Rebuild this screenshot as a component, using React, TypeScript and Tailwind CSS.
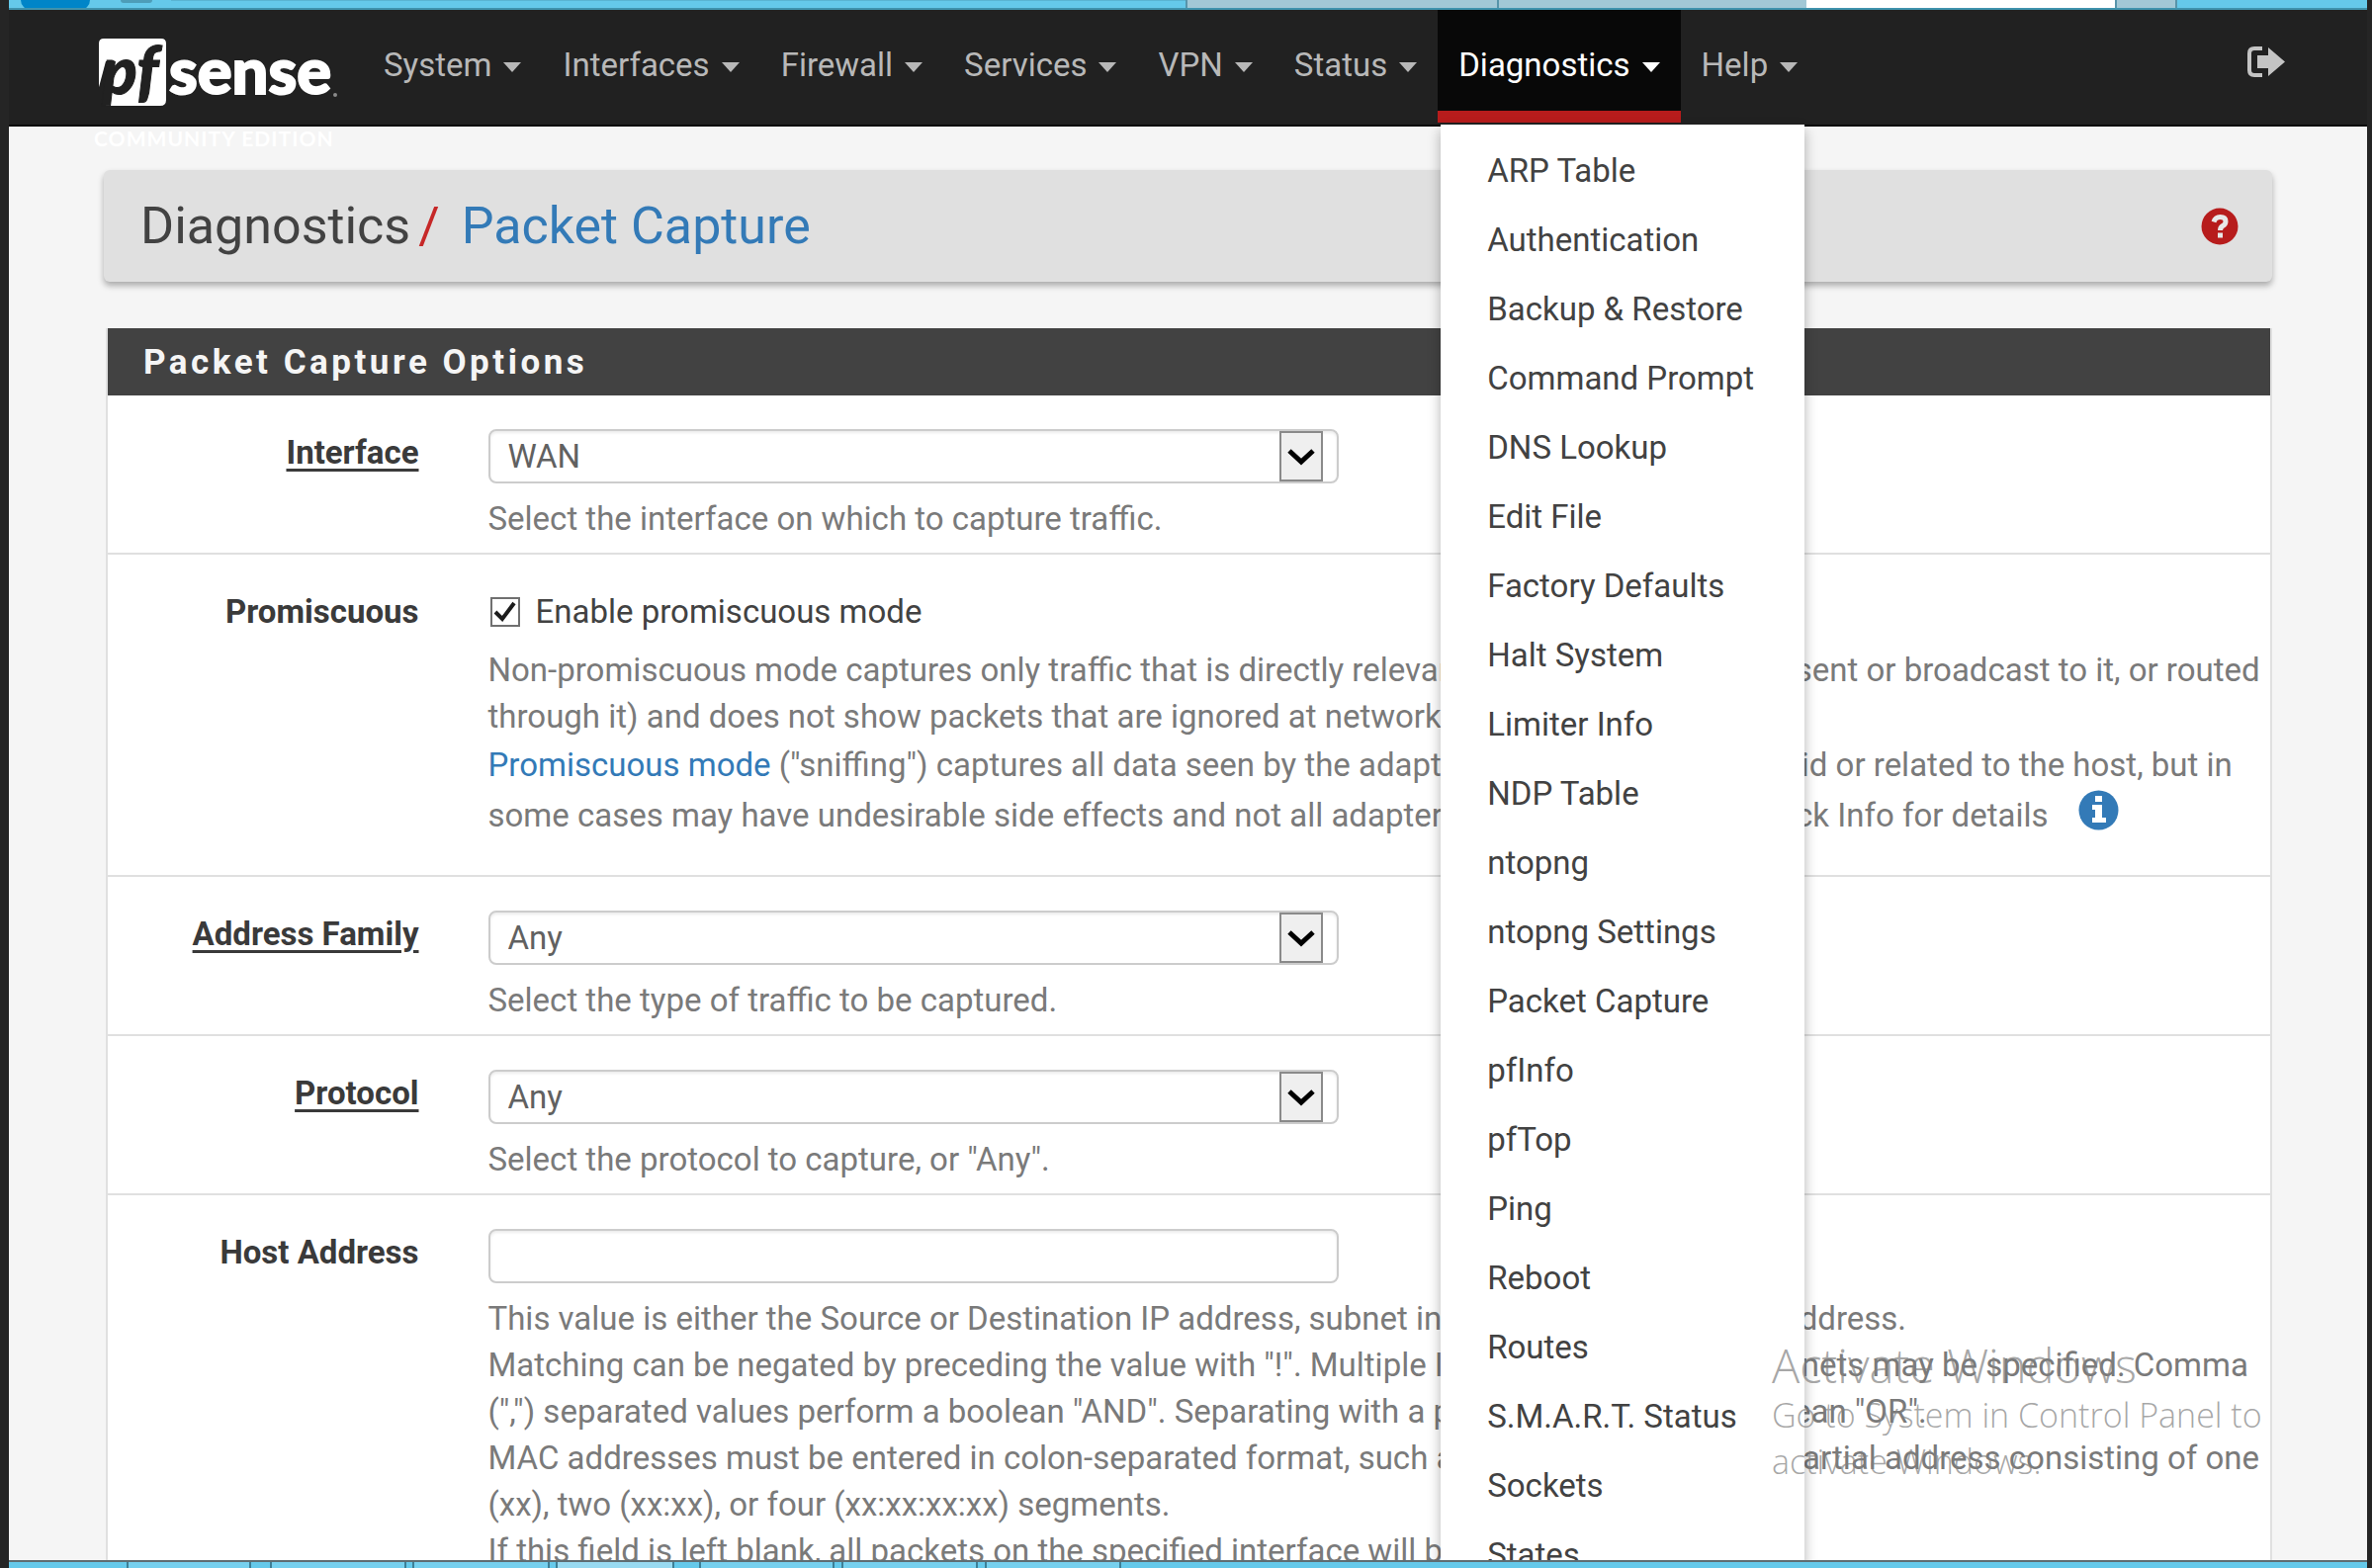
import React from 'react';

const NAV = ['System', 'Interfaces', 'Firewall', 'Services', 'VPN', 'Status', 'Diagnostics', 'Help'];

const MENU = [
  'ARP Table',
  'Authentication',
  'Backup & Restore',
  'Command Prompt',
  'DNS Lookup',
  'Edit File',
  'Factory Defaults',
  'Halt System',
  'Limiter Info',
  'NDP Table',
  'ntopng',
  'ntopng Settings',
  'Packet Capture',
  'pfInfo',
  'pfTop',
  'Ping',
  'Reboot',
  'Routes',
  'S.M.A.R.T. Status',
  'Sockets',
  'States',
];

function Caret() {
  return (
    <svg viewBox="0 0 18 10" className="mt-1 h-[10px] w-[18px]" fill="currentColor" aria-hidden="true">
      <path d="M0 0h18l-9 10z" />
    </svg>
  );
}

function Logo() {
  return (
    <a href="#" aria-label="pfSense home" className="relative ml-[86px] w-[272px] shrink-0">
      <svg viewBox="0 0 250 112" className="absolute top-[26px] left-0 h-[112px] w-[250px]" aria-hidden="true">
        <path d="M10 3H68Q73 3 73 8V65Q73 71 67 71H12L16 56L8 48L5 58V8Q5 3 10 3Z" fill="#fff" />
        <path d="M12 26H22L12 71H4V56Z" fill="#212121" />
        <text
          x="8"
          y="59"
          fill="#212121"
          stroke="#212121"
          strokeWidth="1"
          fontFamily="Lato, 'Open Sans', sans-serif"
          fontWeight="900"
          fontStyle="italic"
          fontSize="66"
        >
          pf
        </text>
        <text
          x="76"
          y="59"
          fill="#fff"
          stroke="#fff"
          strokeWidth="2"
          fontFamily="Lato, 'Open Sans', sans-serif"
          fontWeight="900"
          fontSize="65"
        >
          sense
        </text>
        <circle cx="244" cy="60" r="2" fill="#8a8a8a" />
      </svg>
      <span className="absolute top-[116px] left-0 font-[Lato] text-[21px] leading-7 font-bold tracking-wider whitespace-nowrap text-white">
        COMMUNITY EDITION
      </span>
    </a>
  );
}

function DiagnosticsMenu() {
  return (
    <ul className="absolute top-[116px] left-[3px] z-20 w-[368px] bg-white pt-3 shadow-[0_6px_12px_rgba(0,0,0,0.3)]">
      {MENU.map((item) => (
        <li key={item}>
          <a href="#" className="block pl-[47px] leading-[70px] whitespace-nowrap text-[#424242]">
            {item}
          </a>
        </li>
      ))}
    </ul>
  );
}

function NavBar() {
  return (
    <nav className="relative z-10 flex h-[118px] border-b-2 border-[#080808] bg-[#212121]">
      <Logo />
      <ul className="flex">
        {NAV.map((item) => {
          const open = item === 'Diagnostics';
          return (
            <li key={item} className="relative">
              <button
                type="button"
                aria-expanded={open}
                className={
                  open
                    ? 'flex h-[114px] items-center gap-3 border-b-[12px] border-[#b71c1c] bg-[#080808] px-[21px] pt-[9px] text-white'
                    : 'flex h-[114px] items-center gap-3 border-b-[12px] border-transparent px-[21px] pt-[9px] text-[#b8b8b8]'
                }
              >
                {item}
                <Caret />
              </button>
              {open && <DiagnosticsMenu />}
            </li>
          );
        })}
      </ul>
      <a href="#" aria-label="Log out" className="mt-[37px] mr-[83px] ml-auto h-[31px] text-[#c4c4c4]">
        <svg viewBox="0 0 38 31" className="h-[31px] w-[38px]" aria-hidden="true">
          <path d="M15 2H7Q2 2 2 7V24Q2 29 7 29H15" fill="none" stroke="currentColor" strokeWidth="4" />
          <path d="M10 9H21V1L38 15.500L21 30V22H10Z" fill="currentColor" />
        </svg>
      </a>
    </nav>
  );
}

function Row({
  label,
  htmlFor,
  underline,
  children,
}: {
  label: string;
  htmlFor: string;
  underline?: boolean;
  children: React.ReactNode;
}) {
  return (
    <div className="flex border-b-2 border-[#e0e0e0] pt-[34px] pb-[11px]">
      <div className="w-1/6 shrink-0 pr-[50px] text-right">
        <label
          htmlFor={htmlFor}
          className={
            underline
              ? 'leading-[47px] font-bold text-[#3a3a3a] underline decoration-[3px] underline-offset-[5px]'
              : 'leading-[47px] font-bold text-[#3a3a3a]'
          }
        >
          {label}
        </label>
      </div>
      <div className="min-w-0 flex-1 pr-1 pl-5">{children}</div>
    </div>
  );
}

function SelectBox({ id, value }: { id: string; value: string }) {
  return (
    <div className="relative w-full max-w-[860px]">
      <select
        id={id}
        defaultValue={value}
        className="block h-[55px] w-full appearance-none rounded-lg border-2 border-[#cccccc] bg-white px-[18px] text-[#616161] shadow-[inset_0_2px_3px_rgba(0,0,0,0.08)]"
      >
        <option>{value}</option>
      </select>
      <span className="pointer-events-none absolute top-[2px] right-4 flex h-[51px] w-[44px] items-center justify-center border-2 border-[#8a8a8a] bg-[#efefef]">
        <svg viewBox="0 0 28 18" className="h-[18px] w-[28px]" fill="none" stroke="#000" strokeWidth="5" aria-hidden="true">
          <path d="M2 3L14 14L26 3" />
        </svg>
      </span>
    </div>
  );
}

function Help({ children }: { children: React.ReactNode }) {
  return <p className="mt-3 leading-[47px] text-[#7a7a7a]">{children}</p>;
}

const TASKS = [
  'ml-[119px] w-[126px] bg-[#76d0ee]',
  'ml-[19px] w-[138px] bg-[#76d0ee]',
  'ml-[6px] w-[139px] bg-[#76d0ee]',
  'ml-[6px] w-[120px] bg-[#98daf1]',
  'ml-[25px] w-[137px] bg-[#76d0ee]',
  'ml-[7px] w-[138px] bg-[#76d0ee]',
  'ml-[7px] w-[138px] bg-[#76d0ee]',
];

export default function App() {
  return (
    <div className="flex h-screen flex-col overflow-hidden bg-[#252525] pr-[5px] pl-[9px] font-[Roboto,sans-serif] text-[33px] leading-[38px]">
      <div className="flex h-[10px] shrink-0 overflow-hidden border-b-2 border-[#3f93ad] bg-[#65c9ea]">
        <div className="ml-3 h-[10px] w-[70px] rounded-b-full bg-[#0085c8]" />
        <div className="ml-[31px] h-[3px] w-[32px] rounded-b-full bg-[#4d9db8]" />
        <div className="ml-[19px] h-px flex-1 bg-[#59b4d2]" />
        <div className="w-[315px] border-l-2 border-[#5794aa] bg-[#a2c8d6]" />
        <div className="w-[313px] border-l-2 border-[#5794aa] bg-[#a2c8d6]" />
        <div className="w-[312px] bg-white" />
        <div className="w-[63px] border-x-2 border-[#5794aa] bg-[#a2c8d6]" />
        <div className="w-[192px]" />
      </div>

      <div className="relative min-h-0 flex-1 overflow-hidden bg-[#f5f5f5]">
        <NavBar />

        <header className="mx-24 mt-11 flex h-[113px] items-center justify-between rounded-md bg-[#e0e0e0] pr-[34px] pl-[37px] shadow-[0_4px_6px_rgba(0,0,0,0.3)]">
          <h1 className="flex text-[52px] leading-[60px] whitespace-nowrap">
            <span className="text-[#424242]">Diagnostics</span>
            <span className="pl-2 text-[#c62828]">/</span>
            <a href="#" className="pl-[22px] text-[#337ab7]">
              Packet Capture
            </a>
          </h1>
          <a href="#" aria-label="Help for this page">
            <svg viewBox="0 0 38 38" className="h-[38px] w-[38px]" aria-hidden="true">
              <circle cx="19" cy="19" r="18.500" fill="#b71c1c" />
              <path d="M13 14.500Q14.500 9.500 19.500 9.500Q25 9.500 25 14Q25 17 22 18.500Q19.500 20 19.500 23" fill="none" stroke="#e8e8e8" strokeWidth="5" />
              <rect x="17" y="25.500" width="5" height="5" fill="#e8e8e8" />
            </svg>
          </a>
        </header>

        <section className="mt-[47px] mr-[96px] ml-[98px] border-x-2 border-[#e0e0e0] bg-white">
          <h2 className="bg-[#424242] pt-px pl-[36px] text-[35px] leading-[67px] font-bold tracking-widest text-[#f5f5f5]">
            Packet Capture Options
          </h2>

          <Row label="Interface" htmlFor="interface" underline>
            <SelectBox id="interface" value="WAN" />
            <Help>Select the interface on which to capture traffic.</Help>
          </Row>

          <Row label="Promiscuous" htmlFor="promiscuous">
            <div className="flex h-[47px] items-center gap-4 pl-0.5">
              <span className="relative h-[30px] w-[30px]">
                <input
                  id="promiscuous"
                  type="checkbox"
                  defaultChecked
                  className="peer block h-[30px] w-[30px] appearance-none border-2 border-[#707070] bg-white"
                />
                <svg
                  viewBox="0 0 30 30"
                  className="pointer-events-none absolute inset-0 hidden h-[30px] w-[30px] peer-checked:block"
                  aria-hidden="true"
                >
                  <path d="M5 15L12 22L24 6" fill="none" stroke="#1c1c1c" strokeWidth="4" />
                </svg>
              </span>
              <label htmlFor="promiscuous" className="text-[#424242]">
                Enable promiscuous mode
              </label>
            </div>
            <div className="mt-3 pb-6 text-[#7a7a7a]">
              <p className="leading-[47px]">
                Non-promiscuous mode captures only traffic that is directly relevant to the host (sent by it, sent or
                broadcast to it, or routed through it) and does not show packets that are ignored at network adapter
                level.
              </p>
              <p className="leading-[51px]">
                <a href="#" className="text-[#337ab7]">
                  Promiscuous mode
                </a>{' '}
                ("sniffing") captures all data seen by the adapter, whether or not it is valid or related to the host,
                but in some cases may have undesirable side effects and not all adapters support this option. Click Info
                for details
                <button type="button" aria-label="Info" className="ml-[30px] h-[41px] w-[41px] align-top">
                  <svg viewBox="0 0 41 41" className="h-[41px] w-[41px]" aria-hidden="true">
                    <circle cx="20.500" cy="20.500" r="20" fill="#337ab7" />
                    <path d="M17 6H24V12H17ZM14 15H24V28H28V33H14V28H17V20H14Z" fill="#fff" />
                  </svg>
                </button>
              </p>
            </div>
          </Row>

          <Row label="Address Family" htmlFor="family" underline>
            <SelectBox id="family" value="Any" />
            <Help>Select the type of traffic to be captured.</Help>
          </Row>

          <Row label="Protocol" htmlFor="protocol" underline>
            <SelectBox id="protocol" value="Any" />
            <Help>Select the protocol to capture, or "Any".</Help>
          </Row>

          <Row label="Host Address" htmlFor="host">
            <input
              id="host"
              type="text"
              className="block h-[55px] w-full max-w-[860px] rounded-lg border-2 border-[#cccccc] bg-white px-[18px] text-[#616161] shadow-[inset_0_2px_3px_rgba(0,0,0,0.08)]"
            />
            <Help>
              This value is either the Source or Destination IP address, subnet in CIDR notation, or MAC address.
              <br />
              Matching can be negated by preceding the value with "!". Multiple IP addresses or CIDR subnets may be
              specified. Comma (",") separated values perform a boolean "AND". Separating with a pipe ("|") performs a
              boolean "OR".
              <br />
              MAC addresses must be entered in colon-separated format, such as xx:xx:xx:xx:xx:xx or a partial address
              consisting of one (xx), two (xx:xx), or four (xx:xx:xx:xx) segments.
              <br />
              If this field is left blank, all packets on the specified interface will be captured.
            </Help>
          </Row>
        </section>

        <div className="pointer-events-none absolute right-[104px] bottom-[76px] z-30 w-[498px] font-['Open_Sans'] font-light whitespace-nowrap text-[#808080]/70">
          <p className="text-[47px] leading-[54px]">Activate Windows</p>
          <p className="text-[34px] leading-[47px]">
            Go to System in Control Panel to
            <br />
            activate Windows.
          </p>
        </div>
      </div>

      <div className="flex h-2 shrink-0 border-t-2 border-[#5f6d72] bg-[#65c9ea]">
        {TASKS.map((t, i) => (
          <div key={i} className={`${t} border-x-2 border-[#3d7f96]`} />
        ))}
      </div>
    </div>
  );
}
